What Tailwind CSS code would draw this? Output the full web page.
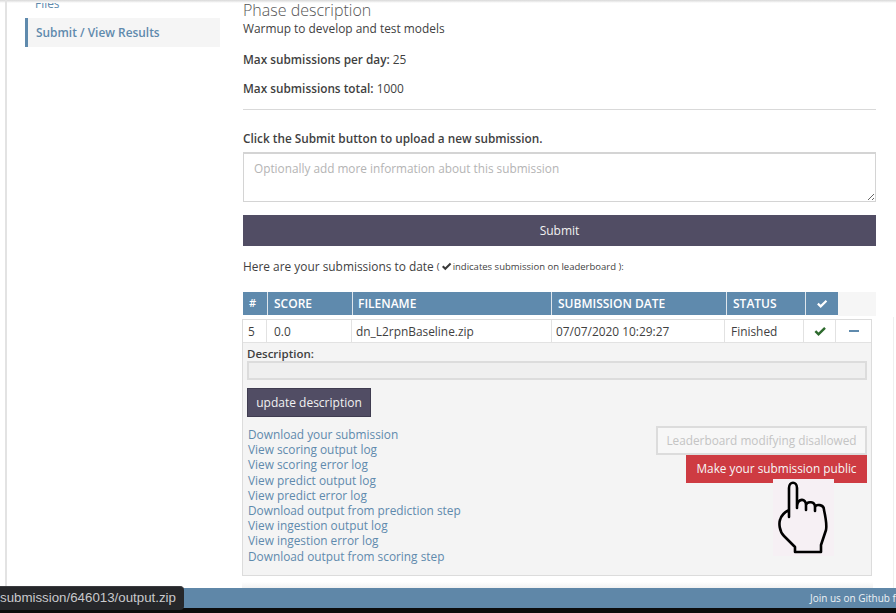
<!DOCTYPE html>
<html>
<head>
<meta charset="utf-8">
<script src="https://cdn.jsdelivr.net/npm/@tailwindcss/browser@4"></script>
</head>
<body class="bg-white">
<div class="relative w-[896px] h-[613px] overflow-hidden bg-white font-['Open_Sans',sans-serif] text-[11.9px] text-[#3f3f3f]">
  <div class="absolute left-0 right-0 top-0 h-[3px] bg-gradient-to-b from-[#d8d8d8] to-white"></div>
  <div class="absolute left-[5px] top-0 w-[2px] h-[588px] bg-[#e3e3e3]"></div>
  <div class="absolute left-[893px] top-[317px] w-[1px] h-[271px] bg-[#efefef]"></div>

  <div class="flex h-[588px]">
    <aside class="w-[243px] shrink-0 pl-[25px]">
      <div class="h-[18px] -mt-[4px] pl-[10px] text-[#5f8aad] font-medium leading-[14px]">Files</div>
      <div class="w-[195px] h-[29px] mt-[4px] flex items-center pt-[1px] pl-[8px] border-l-[3px] border-[#5f8aad] bg-[#f5f5f5] text-[#5f8aad] font-semibold">Submit / View Results</div>
    </aside>
    <main class="w-[633px] shrink-0">
      <h2 class="text-[16px] font-light leading-[20px] text-[#555]">Phase description</h2>
      <p class="leading-[17px]">Warmup to develop and test models</p>
      <p class="leading-[17px] mt-[14px]"><span class="font-semibold text-[11.8px]">Max submissions per day:</span> 25</p>
      <p class="leading-[17px] mt-[12px]"><span class="font-semibold text-[11.8px]">Max submissions total:</span> 1000</p>
      <div class="h-px bg-[#d9d9d9] mt-[12px]"></div>
      <p class="leading-[17px] mt-[20px] font-semibold text-[11.8px]">Click the Submit button to upload a new submission.</p>
      <div class="relative h-[50px] mt-[5px] border border-[#d4d4d4] border-t-2 pl-[10px] pt-[6px] text-[#b4b4b4] leading-[17px] text-[11.8px]">
        Optionally add more information about this submission
        <svg class="absolute right-[0px] bottom-[0px]" width="8" height="8" viewBox="0 0 8 8" fill="none" stroke="#666" stroke-width="1"><path d="M1 7 7 1M5 7 7 5"/></svg>
      </div>
      <button class="block w-full h-[31px] mt-[13px] bg-[#514d64] text-[#f2f2f2] text-[12px]">Submit</button>
      <p class="mt-[12px] leading-[17px] flex items-center">Here are your submissions to date&nbsp;<span class="text-[9.5px] flex items-center gap-[1px]">(<svg width="11" height="9" viewBox="0 0 11 9"><path d="M1 5 2.4 3.4 4.3 5.3 8.9.8 10.3 2.2 4.3 8.2Z" fill="#3a3a3a"/></svg> indicates submission on leaderboard ):</span></p>

      <div class="mt-[17px] flex h-[23px] w-[595px] bg-[#5f8aad] text-white font-semibold items-stretch text-[12px]">
        <div class="w-[25px] border-r border-[#dfe6ec] flex items-center pl-[6px] text-[11px]">#</div>
        <div class="w-[85px] border-r border-[#dfe6ec] flex items-center pl-[6px]">SCORE</div>
        <div class="w-[199px] border-r border-[#dfe6ec] flex items-center pl-[5px]">FILENAME</div>
        <div class="w-[175px] border-r border-[#dfe6ec] flex items-center pl-[6px]">SUBMISSION DATE</div>
        <div class="w-[79px] border-r border-[#dfe6ec] flex items-center pl-[6px]">STATUS</div>
        <div class="flex-1 flex items-center justify-center"><svg width="12" height="10" viewBox="0 0 11 9"><path d="M1 5 2.4 3.4 4.3 5.3 8.9.8 10.3 2.2 4.3 8.2Z" fill="#fff"/></svg></div>
      </div>
    </main>
  </div>

  <div class="absolute left-[838px] top-[292px] w-[38px] h-[24px] bg-[#f6f6f6]"></div>

  <section class="absolute left-[242px] top-[319px] w-[630px] h-[257px] border border-[#dcdcdc] bg-[#f4f4f4]">
    <div class="flex h-[23px] bg-white border-b border-[#e2e2e2] items-stretch leading-[23px]">
      <div class="w-[24px] border-r border-[#e2e2e2] pl-[5px]">5</div>
      <div class="w-[85px] border-r border-[#e2e2e2] pl-[7px]">0.0</div>
      <div class="w-[200px] border-r border-[#e2e2e2] pl-[4px]">dn_L2rpnBaseline.zip</div>
      <div class="w-[173px] border-r border-[#e2e2e2] pl-[4px]">07/07/2020 10:29:27</div>
      <div class="w-[79px] border-r border-[#e2e2e2] pl-[6px]">Finished</div>
      <div class="w-[32px] border-r border-[#e2e2e2] flex items-center justify-center"><svg width="14" height="11" viewBox="0 0 11 9"><path d="M1 5 2.4 3.4 4.3 5.3 8.9.8 10.3 2.2 4.3 8.2Z" fill="#2d6a2d"/></svg></div>
      <div class="flex-1 flex items-center justify-center"><div class="w-[10px] h-[2px] bg-[#5f8aad]"></div></div>
    </div>
    <div class="pl-[4px] pr-[4px]">
      <div class="font-semibold leading-[17px] mt-[2px] text-[11.5px]">Description:</div>
      <div class="h-[19px] -mt-[1px] border-2 border-[#dcdcdc] bg-[#efefef]"></div>
      <button class="block w-[124px] h-[29px] mt-[8px] bg-[#514d64] text-[#f2f2f2] text-[12px] border border-[#3f3c50]">update description</button>
      <div class="flex justify-between">
        <ul class="mt-[10px] pl-[1px] text-[#5f8aad] text-[11.85px] leading-[15.2px]">
          <li>Download your submission</li>
          <li>View scoring output log</li>
          <li>View scoring error log</li>
          <li>View predict output log</li>
          <li>View predict error log</li>
          <li>Download output from prediction step</li>
          <li>View ingestion output log</li>
          <li>View ingestion error log</li>
          <li>Download output from scoring step</li>
        </ul>
        <div class="w-[211px] mt-[9px] flex flex-col items-end">
          <div class="w-[211px] h-[29px] border-2 border-[#dcdcdc] bg-[#f7f7f7] text-[#c4c4c4] text-[11.8px] flex items-center justify-center">Leaderboard modifying disallowed</div>
          <div class="w-[181px] h-[28px] bg-[#ce3b42] text-[#f6f6f6] text-[11.8px] flex items-center justify-center">Make your submission public</div>
        </div>
      </div>
    </div>
  </section>

  <div class="absolute left-[773px] top-[479px] w-[61px] h-[77px] bg-[#f6f0f4]">
    <svg width="61" height="77" viewBox="0 0 61 77" fill="none" stroke="#000" stroke-width="2.6" stroke-linejoin="round" stroke-linecap="round">
      <path d="M16 38 V9 C16 2 24 2 24 9 V29 M24 27 C25 19 33 19 33 26 V31 M33 26 C34 22 42 22 42 28 V32 M42 28 C43 25 51 25 51 31 C53 40 54 46 53 51 L48 66 V73 H22 V68 L11 57 C6 52 6 44 7 41 C8 37 12 33 16 31"/>
    </svg>
  </div>

  <div class="absolute left-[242px] top-[576px] w-[631px] h-[12px] bg-gradient-to-b from-white via-white to-[#f1f1f1]"></div>
  <footer class="absolute left-0 right-0 top-[588px] h-[20px] bg-[#5f87a8] text-[#eef2f5] text-[10px] leading-[21px] pl-[810px] whitespace-nowrap overflow-hidden">Join us on Github for</footer>
  <div class="absolute left-0 right-0 top-[608px] h-[5px] bg-[#0c0c0c]"></div>
  <div class="absolute left-0 top-[586px] w-[184px] h-[24px] bg-[#26272a] rounded-tr-[4px] rounded-br-[4px] border-t border-[#3a3b3e] text-[#c9c9cc] text-[13.3px] font-['Liberation_Sans',sans-serif] leading-[22px] overflow-hidden whitespace-nowrap">submission/646013/output.zip</div>
</div>
</body>
</html>
